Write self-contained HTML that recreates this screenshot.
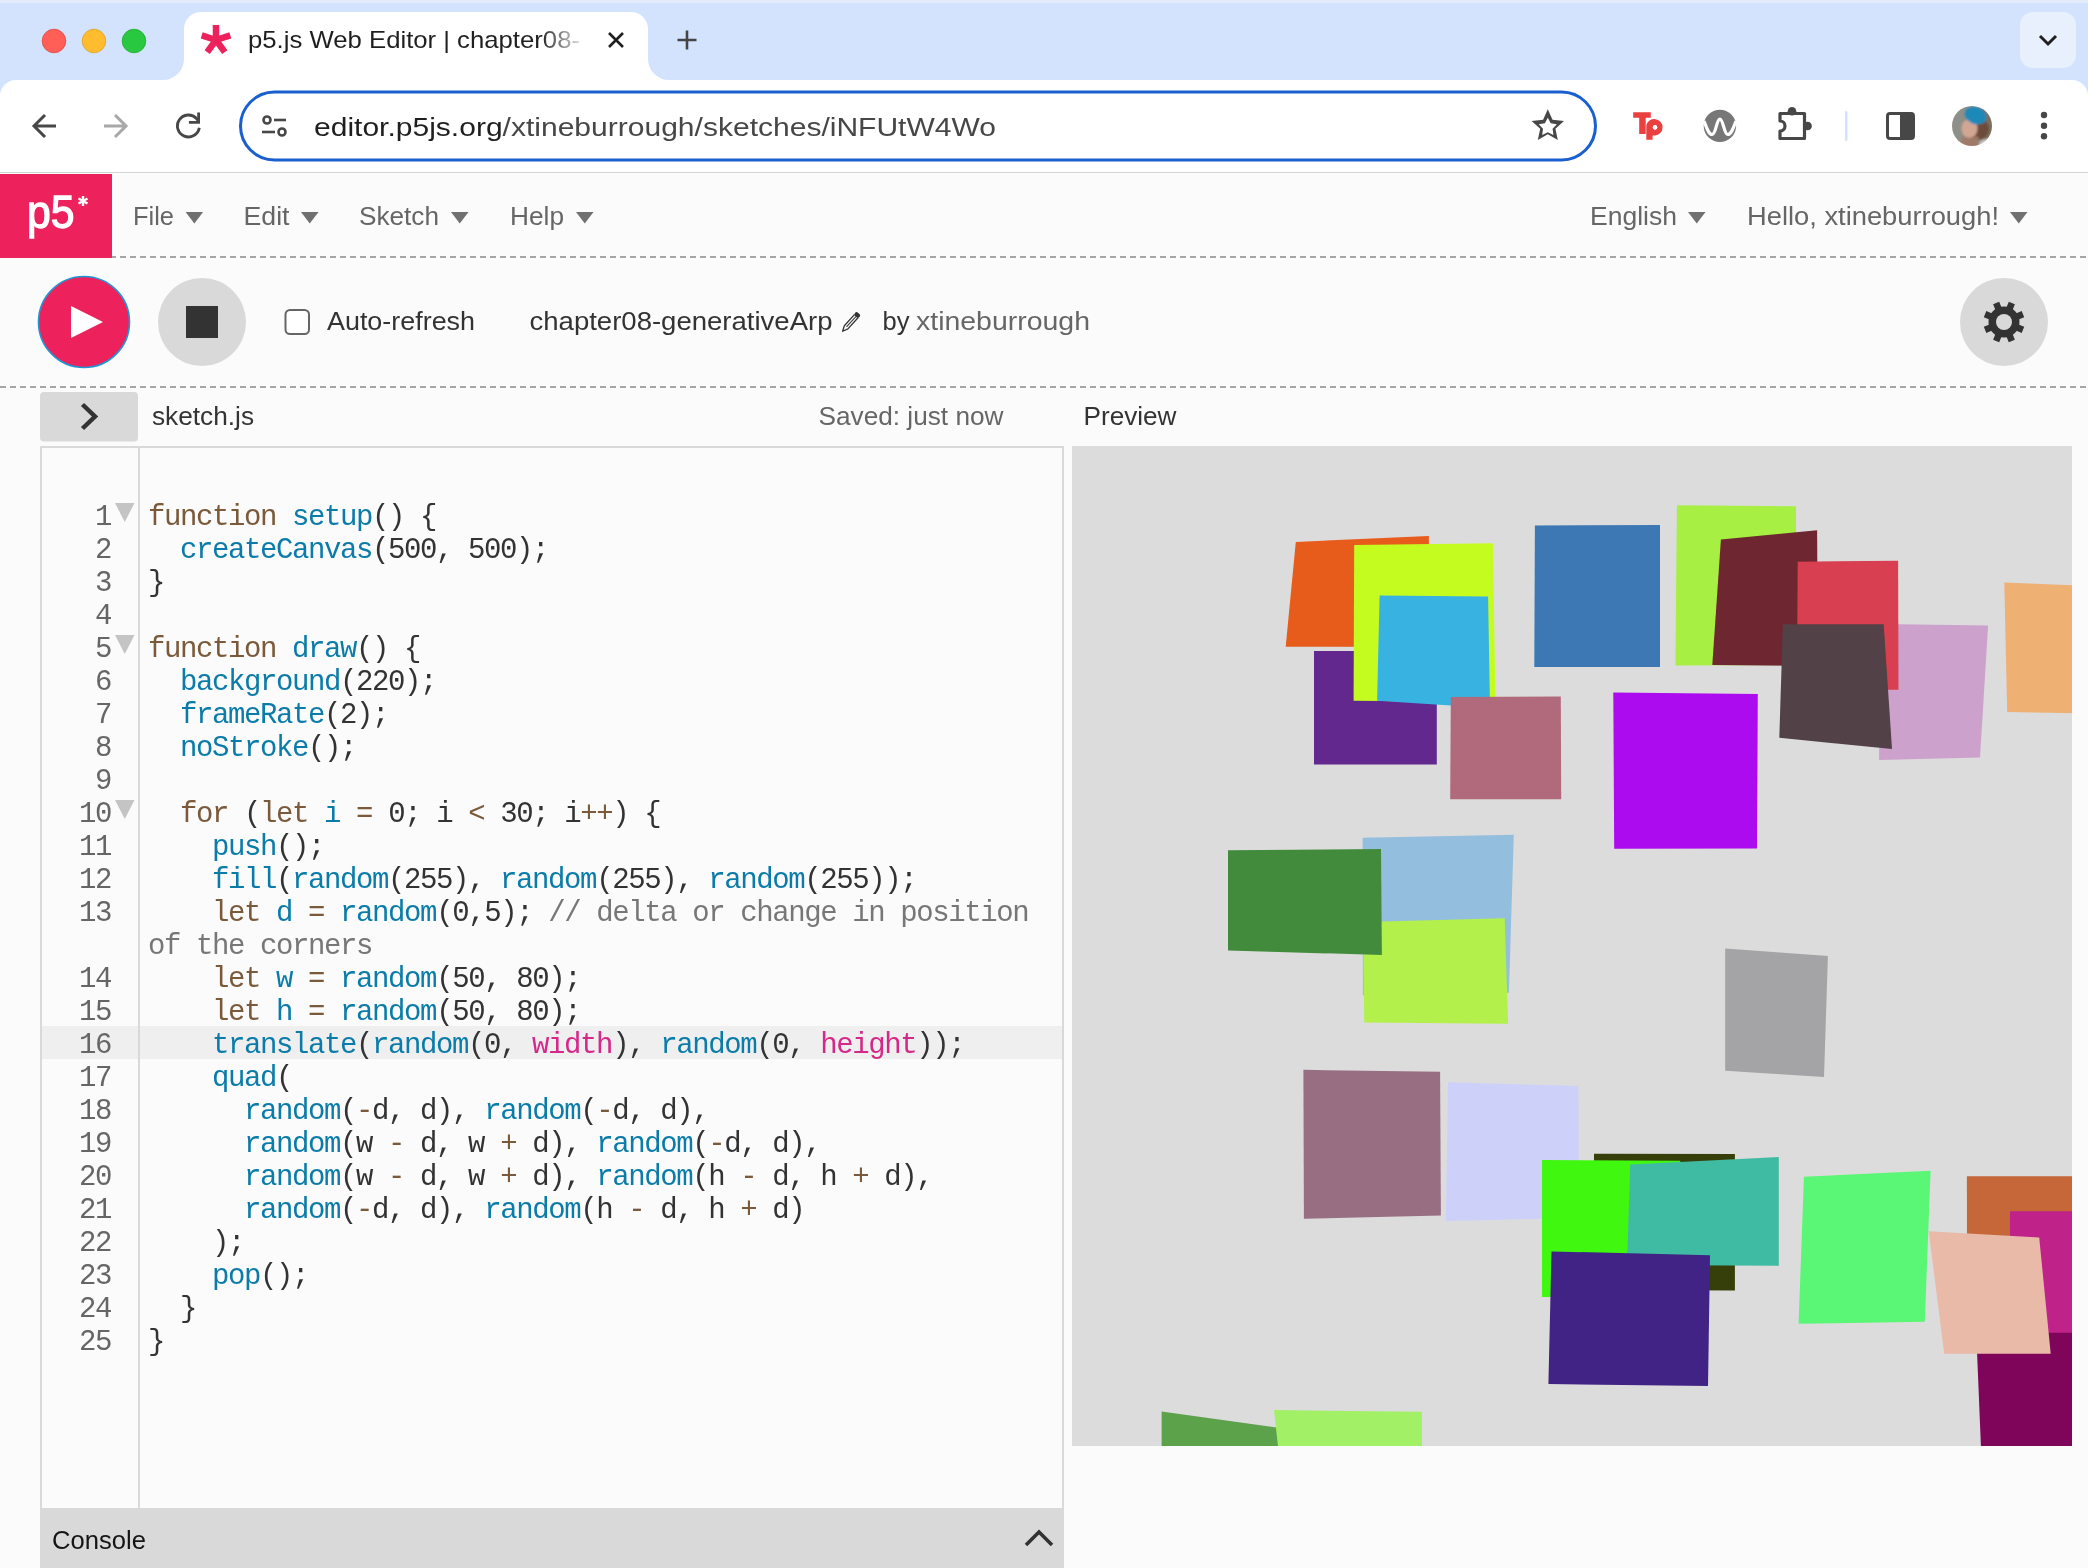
<!DOCTYPE html><html><head><meta charset="utf-8"><title>p5.js Web Editor</title><style>
*{margin:0;padding:0;box-sizing:border-box}
html,body{width:2088px;height:1568px;overflow:hidden;background:#fbfbfb;font-family:"Liberation Sans",sans-serif}
.a{position:absolute}
svg{position:absolute;overflow:visible;will-change:transform}
.code{will-change:transform}
.code .ln{position:absolute;left:42px;width:69px;text-align:right;color:#666}
.code .cl{position:absolute;left:148px;white-space:pre;color:#333}
.code div{font-family:"Liberation Mono",monospace;font-size:29px;letter-spacing:-1.4px;line-height:33px;height:33px}
.dash{position:absolute;height:2px;background-image:linear-gradient(90deg,#a6a6a6 6px,transparent 6px);background-size:10px 2px;background-repeat:repeat-x}
</style></head><body><header class="a" style="left:0;top:0;width:2088px;height:173px;background:#d3e3fd"><div class="a" style="left:0;top:0;width:2088px;height:3px;background:#e3ebfb"></div><div class="a" style="left:0;top:80px;width:2088px;height:92px;background:#fff;border-radius:16px 16px 0 0"></div><div class="a" style="left:0;top:172px;width:2088px;height:1px;background:#d3d3d3"></div></header><svg class="a" style="left:0;top:0" width="2088" height="173"><circle cx="54" cy="41" r="11.8" fill="#ff5f57" stroke="#e0443e" stroke-width="0.8"/><circle cx="94" cy="41" r="11.8" fill="#febc2e" stroke="#dea123" stroke-width="0.8"/><circle cx="134" cy="41" r="11.8" fill="#28c840" stroke="#1aab29" stroke-width="0.8"/><path d="M163 80 A21 21 0 0 0 184 59 L184 29 A17 17 0 0 1 201 12 L631 12 A17 17 0 0 1 648 29 L648 59 A21 21 0 0 0 669 80 Z" fill="#fff"/><line x1="216" y1="40" x2="216.0" y2="25.0" stroke="#ed225d" stroke-width="6.5"/><line x1="216" y1="40" x2="230.3" y2="35.4" stroke="#ed225d" stroke-width="6.5"/><line x1="216" y1="40" x2="224.8" y2="52.1" stroke="#ed225d" stroke-width="6.5"/><line x1="216" y1="40" x2="207.2" y2="52.1" stroke="#ed225d" stroke-width="6.5"/><line x1="216" y1="40" x2="201.7" y2="35.4" stroke="#ed225d" stroke-width="6.5"/><defs><linearGradient id="fade" x1="0" x2="1"><stop offset="0" stop-color="#1f1f1f"/><stop offset="0.88" stop-color="#1f1f1f"/><stop offset="1" stop-color="#1f1f1f" stop-opacity="0.15"/></linearGradient></defs><text x="248" y="48" font-size="24" fill="url(#fade)" text-anchor="start" font-family="Liberation Sans" textLength="332" lengthAdjust="spacingAndGlyphs" >p5.js Web Editor | chapter08-</text><path d="M609 33 L623 47 M623 33 L609 47" stroke="#1f1f1f" stroke-width="2.6"/><path d="M677.5 40 H696.5 M687 30.5 V49.5" stroke="#444" stroke-width="2.6"/><rect x="2020" y="12" width="56" height="56" rx="13" fill="#e9f0fd"/><path d="M2040 36 L2048 44 L2056 36" stroke="#1f1f1f" stroke-width="3" fill="none"/><path d="M56 126 H34 M45 115 L34 126 L45 137" stroke="#474747" stroke-width="3" fill="none"/><path d="M104 126 H126 M115 115 L126 126 L115 137" stroke="#a8a8a8" stroke-width="3" fill="none"/><path d="M199.3 127.8 A11 11 0 1 1 196.5 118.5 L198.5 121" stroke="#474747" stroke-width="2.9" fill="none"/><path d="M190.3 122.3 H198.6 V114" stroke="#474747" stroke-width="2.8" fill="none" stroke-linecap="square"/><rect x="240.5" y="92" width="1355" height="68" rx="34" fill="#fff" stroke="#1a5fd0" stroke-width="3"/><circle cx="267" cy="120" r="3.5" fill="none" stroke="#474747" stroke-width="2.6"/><path d="M274 120 H286" stroke="#474747" stroke-width="2.6"/><circle cx="282" cy="132" r="3.5" fill="none" stroke="#474747" stroke-width="2.6"/><path d="M262 132 H275" stroke="#474747" stroke-width="2.6"/><text x="314" y="135.5" font-size="26.5" font-family="Liberation Sans" textLength="682" lengthAdjust="spacingAndGlyphs"><tspan fill="#1f1f1f">editor.p5js.org</tspan><tspan fill="#474747">/xtineburrough/sketches/iNFUtW4Wo</tspan></text><path d="M1547.8,109.3 1552.5,119.8 1564.0,121.0 1555.4,128.8 1557.8,140.1 1547.8,134.3 1537.8,140.1 1540.2,128.8 1531.6,121.0 1543.1,119.8 Z M1547.8,117.7 1550.7,123.3 1556.9,124.3 1552.6,128.8 1553.4,135.1 1547.8,132.3 1542.2,135.1 1543.0,128.8 1538.7,124.3 1544.9,123.3 Z" fill="#474747" fill-rule="evenodd"/><path d="M1633.2 112.3 H1650.8 V117.7 H1645.7 V134 H1639.2 V117.7 H1633.2 Z" fill="#ea4040"/><path d="M1646.3 139.8 V125 A8.3 8.3 0 1 1 1655 135.6 H1652.6 V139.8 Z M1655 125.3 A2.2 2.2 0 1 0 1655.01 125.3 Z" fill="#ea4040" fill-rule="evenodd"/><circle cx="1655" cy="127.3" r="2.2" fill="#fff"/><circle cx="1719.9" cy="125.9" r="16.2" fill="#777"/><path d="M1704 121 C1707 129 1709 134.5 1712 134.5 C1716 134.5 1716.5 119.2 1719.9 119.2 C1723.3 119.2 1724 134.5 1727.8 134.5 C1731 134.5 1733 129 1736 121" stroke="#fff" stroke-width="3.2" fill="none"/><path d="M1780 113.5 H1804.5 V138.5 H1780 V131 A5 5 0 0 0 1780 121 Z" fill="none" stroke="#474747" stroke-width="3.2" stroke-linejoin="round"/><circle cx="1792" cy="111.2" r="4.3" fill="#474747"/><circle cx="1807.6" cy="126" r="4.3" fill="#474747"/><rect x="1845" y="111" width="2.5" height="30" rx="1.2" fill="#d3e3fd"/><rect x="1887.5" y="113.5" width="26" height="25" rx="2.5" fill="none" stroke="#474747" stroke-width="3"/><rect x="1900" y="113.5" width="13.5" height="25" fill="#474747"/><defs><clipPath id="av"><circle cx="1972" cy="126" r="20"/></clipPath><filter id="bl" x="-20%" y="-20%" width="140%" height="140%"><feGaussianBlur stdDeviation="0.9"/></filter></defs><g clip-path="url(#av)"><g filter="url(#bl)"><rect x="1950" y="104" width="44" height="44" fill="#8d8f88"/><rect x="1982" y="104" width="12" height="44" fill="#7d6e5e"/><ellipse cx="1978" cy="129" rx="11" ry="11" fill="#6d4c3a"/><ellipse cx="1969.5" cy="128.5" rx="8" ry="9.5" fill="#d3a694"/><path d="M1960 148 L1962 136 Q1970 140 1978 136 L1980 148 Z" fill="#a07a68"/><ellipse cx="1986" cy="145" rx="7" ry="6" fill="#c9c5bf"/><ellipse cx="1975.5" cy="115.5" rx="11.5" ry="8.5" transform="rotate(22 1975.5 115.5)" fill="#1b89b8"/></g></g><circle cx="2044" cy="115" r="3.2" fill="#474747"/><circle cx="2044" cy="125.7" r="3.2" fill="#474747"/><circle cx="2044" cy="136.3" r="3.2" fill="#474747"/></svg><nav class="a" style="left:0;top:173px;width:2088px;height:85px"><div class="a" style="left:0;top:1px;width:112px;height:84px;background:#ed225d"></div></nav><svg class="a" style="left:0;top:0" width="2088" height="260"><text x="27" y="227.5" font-size="46" fill="#fff" text-anchor="start" font-family="Liberation Sans" textLength="47.5" lengthAdjust="spacingAndGlyphs" stroke="#fff" stroke-width="1.3">p5</text><path d="M83 196 V206 M78.5 198.5 L87.5 203.5 M87.5 198.5 L78.5 203.5" stroke="#fff" stroke-width="2.4"/><text x="133" y="224.5" font-size="25" fill="#666" text-anchor="start" font-family="Liberation Sans" textLength="41" lengthAdjust="spacingAndGlyphs" >File</text><path d="M185.6 212 H203.1 L194.35 223.5 Z" fill="#707070"/><text x="243.5" y="224.5" font-size="25" fill="#666" text-anchor="start" font-family="Liberation Sans" textLength="46.0" lengthAdjust="spacingAndGlyphs" >Edit</text><path d="M301 212 H318.5 L309.75 223.5 Z" fill="#707070"/><text x="359" y="224.5" font-size="25" fill="#666" text-anchor="start" font-family="Liberation Sans" textLength="80" lengthAdjust="spacingAndGlyphs" >Sketch</text><path d="M451 212 H468.5 L459.75 223.5 Z" fill="#707070"/><text x="510" y="224.5" font-size="25" fill="#666" text-anchor="start" font-family="Liberation Sans" textLength="54" lengthAdjust="spacingAndGlyphs" >Help</text><path d="M576 212 H593.5 L584.75 223.5 Z" fill="#707070"/><text x="1590" y="224.5" font-size="25" fill="#666" text-anchor="start" font-family="Liberation Sans" textLength="87" lengthAdjust="spacingAndGlyphs" >English</text><path d="M1688 212 H1705.5 L1696.75 223.5 Z" fill="#707070"/><text x="1747" y="224.5" font-size="25" fill="#666" text-anchor="start" font-family="Liberation Sans" textLength="252" lengthAdjust="spacingAndGlyphs" >Hello, xtineburrough!</text><path d="M2010 212 H2027.5 L2018.75 223.5 Z" fill="#707070"/></svg><div class="dash" style="top:256px;left:112px;width:1976px;background-position:8px 0"></div><svg class="a" style="left:0;top:0" width="2088" height="400"><circle cx="84" cy="322" r="45.5" fill="#ed225d" stroke="#1f96d3" stroke-width="1.6"/><path d="M71 306 L103 322 L71 338 Z" fill="#fff"/><circle cx="202" cy="322" r="44" fill="#d9d9d9"/><rect x="186" y="306" width="32" height="32" fill="#333"/><rect x="285.5" y="310" width="23.5" height="24" rx="4.5" fill="#fff" stroke="#666" stroke-width="2"/><text x="327" y="330" font-size="25" fill="#333" text-anchor="start" font-family="Liberation Sans" textLength="148" lengthAdjust="spacingAndGlyphs" >Auto-refresh</text><text x="529.5" y="330" font-size="25" fill="#333" text-anchor="start" font-family="Liberation Sans" textLength="303" lengthAdjust="spacingAndGlyphs" >chapter08-generativeArp</text><g transform="translate(850.5 322.5) rotate(42)"><path d="M-2.4 -8.5 V6.5 L0 11.8 L2.4 6.5 V-8.5" fill="none" stroke="#333" stroke-width="1.3" stroke-linejoin="round"/><path d="M0 -8 V6" stroke="#333" stroke-width="1"/><rect x="-3" y="-12.3" width="6" height="4.5" rx="2" fill="#333"/></g><text x="882.5" y="330" font-size="25" fill="#333" text-anchor="start" font-family="Liberation Sans" textLength="27" lengthAdjust="spacingAndGlyphs" >by</text><text x="916" y="330" font-size="25" fill="#666" text-anchor="start" font-family="Liberation Sans" textLength="174" lengthAdjust="spacingAndGlyphs" >xtineburrough</text><circle cx="2004" cy="322" r="44" fill="#d9d9d9"/><g transform="translate(2004 322)" fill="#333"><rect x="-3.3" y="-20.5" width="6.6" height="8" transform="rotate(22.5)"/><rect x="-3.3" y="-20.5" width="6.6" height="8" transform="rotate(67.5)"/><rect x="-3.3" y="-20.5" width="6.6" height="8" transform="rotate(112.5)"/><rect x="-3.3" y="-20.5" width="6.6" height="8" transform="rotate(157.5)"/><rect x="-3.3" y="-20.5" width="6.6" height="8" transform="rotate(202.5)"/><rect x="-3.3" y="-20.5" width="6.6" height="8" transform="rotate(247.5)"/><rect x="-3.3" y="-20.5" width="6.6" height="8" transform="rotate(292.5)"/><rect x="-3.3" y="-20.5" width="6.6" height="8" transform="rotate(337.5)"/><circle r="15.5"/><circle r="8" fill="#d9d9d9"/></g></svg><div class="dash" style="top:386px;left:0px;width:2088px;background-position:0px 0"></div><svg class="a" style="left:0;top:0" width="2088" height="450"><rect x="40" y="392" width="98" height="49.5" rx="4" fill="#d9d9d9"/><path d="M82.5 404.5 L95 416.5 L82.5 428.5" stroke="#333" stroke-width="4.5" fill="none"/><text x="152" y="425" font-size="25" fill="#333" text-anchor="start" font-family="Liberation Sans" textLength="102" lengthAdjust="spacingAndGlyphs" >sketch.js</text><text x="818.5" y="425" font-size="25" fill="#666" text-anchor="start" font-family="Liberation Sans" textLength="185" lengthAdjust="spacingAndGlyphs" >Saved: just now</text><text x="1083.5" y="425" font-size="25" fill="#333" text-anchor="start" font-family="Liberation Sans" textLength="93" lengthAdjust="spacingAndGlyphs" >Preview</text></svg><section class="a" style="left:40px;top:446px;width:1024px;height:1122px;border:2px solid #d9d9d9;border-bottom:0;background:#fbfbfb"><div class="a" style="left:0;top:578px;width:1020px;height:33px;background:#efefef"></div><div class="a" style="left:96px;top:0;width:2px;height:1120px;background:#d9d9d9"></div></section><div class="a code" style="left:0;top:3px"><div class="ln" style="top:498px">1</div><div class="ln" style="top:531px">2</div><div class="ln" style="top:564px">3</div><div class="ln" style="top:597px">4</div><div class="ln" style="top:630px">5</div><div class="ln" style="top:663px">6</div><div class="ln" style="top:696px">7</div><div class="ln" style="top:729px">8</div><div class="ln" style="top:762px">9</div><div class="ln" style="top:795px">10</div><div class="ln" style="top:828px">11</div><div class="ln" style="top:861px">12</div><div class="ln" style="top:894px">13</div><div class="ln" style="top:960px">14</div><div class="ln" style="top:993px">15</div><div class="ln" style="top:1026px">16</div><div class="ln" style="top:1059px">17</div><div class="ln" style="top:1092px">18</div><div class="ln" style="top:1125px">19</div><div class="ln" style="top:1158px">20</div><div class="ln" style="top:1191px">21</div><div class="ln" style="top:1224px">22</div><div class="ln" style="top:1257px">23</div><div class="ln" style="top:1290px">24</div><div class="ln" style="top:1323px">25</div><div class="cl" style="top:498px"><span style="color:#7a5a3a">function</span> <span style="color:#0b7ca9">setup</span>() {</div><div class="cl" style="top:531px">  <span style="color:#0b7ca9">createCanvas</span>(500, 500);</div><div class="cl" style="top:564px">}</div><div class="cl" style="top:597px"></div><div class="cl" style="top:630px"><span style="color:#7a5a3a">function</span> <span style="color:#0b7ca9">draw</span>() {</div><div class="cl" style="top:663px">  <span style="color:#0b7ca9">background</span>(220);</div><div class="cl" style="top:696px">  <span style="color:#0b7ca9">frameRate</span>(2);</div><div class="cl" style="top:729px">  <span style="color:#0b7ca9">noStroke</span>();</div><div class="cl" style="top:762px"></div><div class="cl" style="top:795px">  <span style="color:#7a5a3a">for</span> (<span style="color:#7a5a3a">let</span> <span style="color:#0b7ca9">i</span> <span style="color:#7a5a3a">=</span> 0; i <span style="color:#7a5a3a">&lt;</span> 30; i<span style="color:#7a5a3a">++</span>) {</div><div class="cl" style="top:828px">    <span style="color:#0b7ca9">push</span>();</div><div class="cl" style="top:861px">    <span style="color:#0b7ca9">fill</span>(<span style="color:#0b7ca9">random</span>(255), <span style="color:#0b7ca9">random</span>(255), <span style="color:#0b7ca9">random</span>(255));</div><div class="cl" style="top:894px">    <span style="color:#7a5a3a">let</span> <span style="color:#0b7ca9">d</span> <span style="color:#7a5a3a">=</span> <span style="color:#0b7ca9">random</span>(0,5); <span style="color:#777">// delta or change in position</span></div><div class="cl" style="top:927px"><span style="color:#777">of the corners</span></div><div class="cl" style="top:960px">    <span style="color:#7a5a3a">let</span> <span style="color:#0b7ca9">w</span> <span style="color:#7a5a3a">=</span> <span style="color:#0b7ca9">random</span>(50, 80);</div><div class="cl" style="top:993px">    <span style="color:#7a5a3a">let</span> <span style="color:#0b7ca9">h</span> <span style="color:#7a5a3a">=</span> <span style="color:#0b7ca9">random</span>(50, 80);</div><div class="cl" style="top:1026px">    <span style="color:#0b7ca9">translate</span>(<span style="color:#0b7ca9">random</span>(0, <span style="color:#d52889">width</span>), <span style="color:#0b7ca9">random</span>(0, <span style="color:#d52889">height</span>));</div><div class="cl" style="top:1059px">    <span style="color:#0b7ca9">quad</span>(</div><div class="cl" style="top:1092px">      <span style="color:#0b7ca9">random</span>(<span style="color:#7a5a3a">-</span>d, d), <span style="color:#0b7ca9">random</span>(<span style="color:#7a5a3a">-</span>d, d),</div><div class="cl" style="top:1125px">      <span style="color:#0b7ca9">random</span>(w <span style="color:#7a5a3a">-</span> d, w <span style="color:#7a5a3a">+</span> d), <span style="color:#0b7ca9">random</span>(<span style="color:#7a5a3a">-</span>d, d),</div><div class="cl" style="top:1158px">      <span style="color:#0b7ca9">random</span>(w <span style="color:#7a5a3a">-</span> d, w <span style="color:#7a5a3a">+</span> d), <span style="color:#0b7ca9">random</span>(h <span style="color:#7a5a3a">-</span> d, h <span style="color:#7a5a3a">+</span> d),</div><div class="cl" style="top:1191px">      <span style="color:#0b7ca9">random</span>(<span style="color:#7a5a3a">-</span>d, d), <span style="color:#0b7ca9">random</span>(h <span style="color:#7a5a3a">-</span> d, h <span style="color:#7a5a3a">+</span> d)</div><div class="cl" style="top:1224px">    );</div><div class="cl" style="top:1257px">    <span style="color:#0b7ca9">pop</span>();</div><div class="cl" style="top:1290px">  }</div><div class="cl" style="top:1323px">}</div></div><svg class="a" style="left:0;top:0" width="200" height="900"><path d="M115 503 H134.5 L124.75 522 Z" fill="#c4c4c4"/><path d="M115 635 H134.5 L124.75 654 Z" fill="#c4c4c4"/><path d="M115 800 H134.5 L124.75 819 Z" fill="#c4c4c4"/></svg><div class="a" style="left:40px;top:1508px;width:1024px;height:60px;background:#d9d9d9"></div><svg class="a" style="left:0;top:0" width="2088" height="1568"><text x="52" y="1548.5" font-size="25" fill="#151515" text-anchor="start" font-family="Liberation Sans" textLength="94" lengthAdjust="spacingAndGlyphs" >Console</text><path d="M1026 1545 L1039 1532 L1052 1545" stroke="#333" stroke-width="3.6" fill="none"/></svg><div class="a" id="cv" style="left:1072px;top:446px;width:1000px;height:1000px;background:#dcdcdc;overflow:hidden"><svg width="1000" height="1000" style="left:0;top:0"><polygon points="223.8,96.0 356.8,89.9 358.0,201.0 213.7,200.7" fill="#e75b1b"/><polygon points="242.0,205.0 364.8,205.0 364.8,318.5 242.0,318.5" fill="#62288e"/><polygon points="282.2,98.9 420.9,97.3 423.5,256.0 281.6,254.8" fill="#c5fc20"/><polygon points="307.6,149.6 416.1,150.5 418.0,262.0 305.1,254.8" fill="#38b3e1"/><polygon points="378.8,251.0 488.8,250.4 489.2,353.3 378.2,353.3" fill="#b06a7c"/><polygon points="462.9,79.4 588.0,79.0 588.0,221.0 462.3,221.0" fill="#3d78b4"/><polygon points="604.9,59.3 723.9,60.3 725.0,219.0 603.4,219.6" fill="#a7f043"/><polygon points="808.0,178.0 916.1,179.5 908.0,311.6 807.1,314.0" fill="#cca1cc"/><polygon points="648.9,93.4 745.1,84.2 746.0,220.0 640.3,219.0" fill="#6e2731"/><polygon points="725.7,115.7 826.1,114.7 826.5,243.8 725.0,244.0" fill="#d84052"/><polygon points="710.9,178.2 811.7,178.2 820.0,303.1 707.3,291.8" fill="#524146"/><polygon points="932.3,136.6 1018.0,140.0 1018.0,267.5 935.2,266.1" fill="#eeb073"/><polygon points="541.3,246.4 685.8,248.0 685.0,402.4 542.2,402.7" fill="#ac0bef"/><polygon points="290.6,391.7 441.8,388.7 436.9,546.8 290.9,549.3" fill="#94bede"/><polygon points="291.0,476.0 432.7,472.2 436.1,577.8 292.3,576.6" fill="#b3f04c"/><polygon points="156.0,404.3 309.0,403.1 309.9,509.0 156.0,504.4" fill="#428b3c"/><polygon points="653.2,502.4 755.9,510.0 752.0,630.9 653.2,624.8" fill="#a4a3a5"/><polygon points="231.4,623.8 368.1,625.8 368.9,769.6 231.9,772.8" fill="#986e82"/><polygon points="376.0,636.3 506.5,639.9 506.8,772.0 373.9,774.9" fill="#cdd1fa"/><polygon points="522.0,707.8 662.9,708.1 662.9,844.5 522.0,844.0" fill="#363f0a"/><polygon points="470.0,714.1 608.2,714.7 618.0,851.0 470.0,851.0" fill="#40f70f"/><polygon points="558.2,718.4 706.8,711.0 706.8,819.7 555.0,819.0" fill="#40bba3"/><polygon points="479.5,805.4 638.0,809.2 636.0,940.1 476.4,938.0" fill="#412385"/><polygon points="731.9,730.8 858.6,724.7 852.8,875.8 726.6,877.7" fill="#5af776"/><polygon points="894.9,730.2 1018.0,730.2 1018.0,884.0 895.0,884.0" fill="#c56739"/><polygon points="903.7,874.0 1018.0,874.0 1018.0,1014.0 909.5,1014.0" fill="#7f055b"/><polygon points="938.0,765.2 1018.0,765.2 1018.0,886.7 938.0,886.7" fill="#bf2389"/><polygon points="856.7,785.3 967.2,791.4 978.7,907.8 872.2,907.8" fill="#e9baa8"/><polygon points="89.6,965.6 204.5,981.6 208.0,1014.0 89.6,1014.0" fill="#5ca24b"/><polygon points="202.0,964.1 349.9,965.8 349.9,1014.0 207.5,1014.0" fill="#a2f066"/></svg></div></body></html>
